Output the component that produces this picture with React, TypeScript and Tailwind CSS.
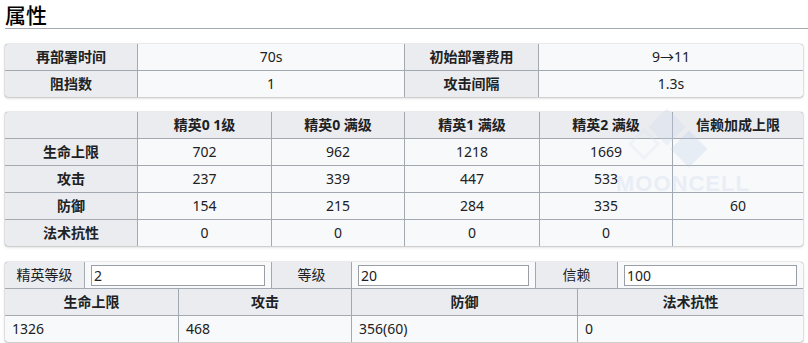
import React from "react";

const th = "bg-[#eaecf0] flex items-center justify-center font-bold h-[26px]";
const td = "bg-[#f8f9fa] flex items-center justify-center h-[26px]";
const tbl =
  "bg-[#a2a9b1] grid gap-px rounded-[3px] overflow-hidden shadow-[0_0_1px_rgba(0,0,0,0.55),0_1px_3px_rgba(0,0,0,0.22)]";

const statRows: { label: string; vals: string[] }[] = [
  { label: "生命上限", vals: ["702", "962", "1218", "1669"] },
  { label: "攻击", vals: ["237", "339", "447", "533"] },
  { label: "防御", vals: ["154", "215", "284", "335"] },
  { label: "法术抗性", vals: ["0", "0", "0", "0"] },
];

function Field({ value }: { value: string }) {
  return (
    <div className="bg-[#f8f9fa] h-[26px] flex items-center px-[6px]">
      <input
        readOnly
        value={value}
        className="w-full h-[21px] bg-white border border-[#9a9fa6] px-[2px] text-[14px] text-[#202122] outline-none"
      />
    </div>
  );
}

export default function App() {
  return (
    <div className="relative w-[808px] h-[343px] overflow-hidden bg-white text-[14px] leading-[20px] text-[#202122] font-['Noto_Sans','Noto_Sans_CJK_SC',sans-serif]">
      <div className="pl-[5px]">
        <div className="h-[29px] border-b border-[#a2a9b1] flex items-center">
          <h2 className="text-[21px] leading-[26px] text-black font-['Noto_Sans_CJK_SC',sans-serif] font-medium">
            属性
          </h2>
        </div>
      </div>

      <div className="px-[5px] pt-[15px]">
        {/* Table 1 */}
        <div className={`${tbl} grid-cols-[132px_266px_133px_264px]`}>
          <div className={th}>再部署时间</div>
          <div className={td}>70s</div>
          <div className={th}>初始部署费用</div>
          <div className={td}>9→11</div>
          <div className={th}>阻挡数</div>
          <div className={td}>1</div>
          <div className={th}>攻击间隔</div>
          <div className={td}>1.3s</div>
        </div>

        {/* Table 2 */}
        <div className={`${tbl} mt-[15px] grid-cols-[132px_133px_132px_134px_132px_130px]`}>
          <div className={th}></div>
          <div className={th}>精英0 1级</div>
          <div className={th}>精英0 满级</div>
          <div className={th}>精英1 满级</div>
          <div className={th}>精英2 满级</div>
          <div className={th}>信赖加成上限</div>
          {statRows.map((r, i) => (
            <React.Fragment key={r.label}>
              <div className={th}>{r.label}</div>
              {r.vals.map((v, j) => (
                <div key={j} className={td}>
                  {v}
                </div>
              ))}
              <div className={td}>{i === 2 ? "60" : ""}</div>
            </React.Fragment>
          ))}
        </div>

        {/* Table 3 */}
        <div className="mt-[16px] bg-[#a2a9b1] flex flex-col gap-px rounded-[3px] overflow-hidden shadow-[0_0_1px_rgba(0,0,0,0.55),0_1px_3px_rgba(0,0,0,0.22)]">
          <div className="grid gap-px grid-cols-[79px_186px_79px_183px_81px_185px]">
            <div className="bg-[#eaecf0] h-[26px] flex items-center justify-center">精英等级</div>
            <Field value="2" />
            <div className="bg-[#eaecf0] h-[26px] flex items-center justify-center">等级</div>
            <Field value="20" />
            <div className="bg-[#eaecf0] h-[26px] flex items-center justify-center">信赖</div>
            <Field value="100" />
          </div>
          <div className="grid gap-px grid-cols-[173px_172px_225px_225px]">
            <div className={th}>生命上限</div>
            <div className={th}>攻击</div>
            <div className={th}>防御</div>
            <div className={th}>法术抗性</div>
            <div className="bg-[#f8f9fa] h-[26px] flex items-center pl-[7px]">1326</div>
            <div className="bg-[#f8f9fa] h-[26px] flex items-center pl-[7px]">468</div>
            <div className="bg-[#f8f9fa] h-[26px] flex items-center pl-[7px]">356(60)</div>
            <div className="bg-[#f8f9fa] h-[26px] flex items-center pl-[7px]">0</div>
          </div>
        </div>
      </div>

      {/* Watermark */}
      <div className="pointer-events-none absolute left-[614px] top-[108px] opacity-25">
        <svg width="130" height="70" viewBox="0 0 130 70">
          <rect x="40" y="6" width="26" height="26" transform="rotate(45 53 19)" fill="#c9d8ef" />
          <rect x="62" y="28" width="26" height="26" transform="rotate(45 75 41)" fill="#b7cbea" />
          <rect x="20" y="26" width="20" height="20" transform="rotate(45 30 36)" fill="none" stroke="#d6e1f2" strokeWidth="3" />
        </svg>
      </div>
      <div className="pointer-events-none absolute left-[616px] top-[174px] text-[22px] font-bold tracking-[1px] text-[#c9d8ef] opacity-30 font-['Liberation_Sans',sans-serif]">
        MOONCELL
      </div>
    </div>
  );
}
